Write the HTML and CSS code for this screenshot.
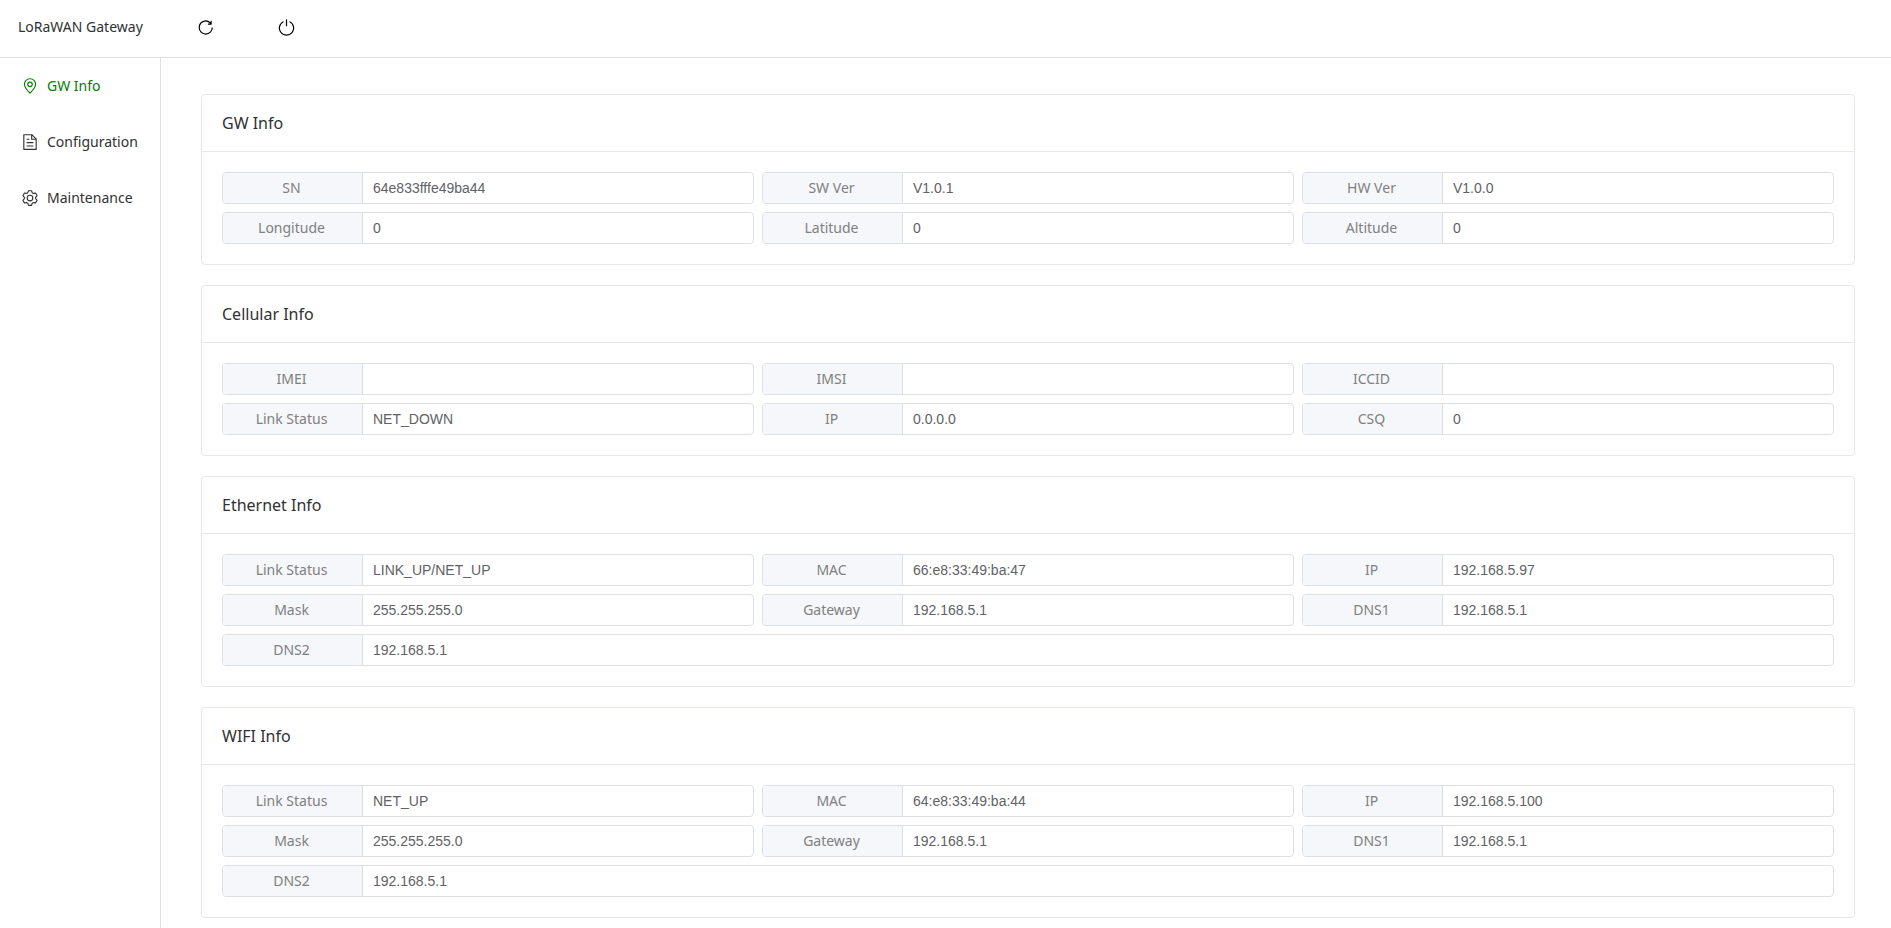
FILE: index.html
```html
<!DOCTYPE html>
<html lang="en">
<head>
<meta charset="utf-8">
<title>LoRaWAN Gateway</title>
<link rel="stylesheet" href="styles.css">
</head>
<body>
<div class="app">
  <header class="topbar">
    <h1 class="brand">LoRaWAN Gateway</h1>
    <div class="actions">
      <button class="icon-button" type="button" aria-label="Refresh">
        <svg class="action-icon" viewBox="0 0 1024 1024" aria-hidden="true"><path d="M784.512 230.272v-50.56a32 32 0 1 1 64 0v149.056a32 32 0 0 1-32 32H667.52a32 32 0 1 1 0-64h92.992A320 320 0 1 0 524.8 833.152a320 320 0 0 0 320-320h64a384 384 0 0 1-384 384 384 384 0 0 1-384-384 384 384 0 0 1 643.712-282.88z"/></svg>
      </button>
      <button class="icon-button" type="button" aria-label="Power">
        <svg class="action-icon" viewBox="0 0 1024 1024" aria-hidden="true"><path d="M352 159.872V230.4a352 352 0 1 0 320 0v-70.528A416.128 416.128 0 0 1 512 960a416 416 0 0 1-160-800.128z"/><path d="M512 64q32 0 32 32v320q0 32-32 32t-32-32V96q0-32 32-32z"/></svg>
      </button>
    </div>
  </header>
  <div class="layout">
    <nav class="sidebar">
      <a class="menu-item active" href="#info">
        <svg class="menu-icon" viewBox="0 0 1024 1024" aria-hidden="true"><path d="M800 416a288 288 0 1 0-576 0c0 118.144 94.528 272.128 288 456.576C705.472 688.128 800 534.144 800 416zM512 960C277.312 746.688 160 565.312 160 416a352 352 0 0 1 704 0c0 149.312-117.312 330.688-352 544z"/><path d="M512 512a96 96 0 1 0 0-192 96 96 0 0 0 0 192zm0 64a160 160 0 1 1 0-320 160 160 0 0 1 0 320z"/></svg>
        <span>GW Info</span>
      </a>
      <a class="menu-item" href="#configuration">
        <svg class="menu-icon" viewBox="0 0 1024 1024" aria-hidden="true"><path d="M832 384H576V128H192v768h640V384zm-26.496-64L640 154.496V320h165.504zM160 64h480l256 256v608a32 32 0 0 1-32 32H160a32 32 0 0 1-32-32V96a32 32 0 0 1 32-32zm160 448h384v64H320v-64zm0-192h160v64H320v-64zm0 384h384v64H320v-64z"/></svg>
        <span>Configuration</span>
      </a>
      <a class="menu-item" href="#maintenance">
        <svg class="menu-icon" viewBox="0 0 1024 1024" aria-hidden="true"><path d="M600.704 64a32 32 0 0 1 30.464 22.208l35.2 109.376c14.784 7.232 28.928 15.36 42.432 24.512l112.384-24.192a32 32 0 0 1 34.432 15.36L944.32 364.8a32 32 0 0 1-4.032 37.504l-77.12 85.12a357.12 357.12 0 0 1 0 49.024l77.12 85.248a32 32 0 0 1 4.032 37.504l-88.704 153.6a32 32 0 0 1-34.432 15.296L708.8 803.904c-13.44 9.088-27.648 17.28-42.368 24.512l-35.264 109.376A32 32 0 0 1 600.704 960H423.296a32 32 0 0 1-30.464-22.208L357.696 828.48a351.616 351.616 0 0 1-42.56-24.64l-112.32 24.256a32 32 0 0 1-34.432-15.36L79.68 659.2a32 32 0 0 1 4.032-37.504l77.12-85.248a357.12 357.12 0 0 1 0-48.896l-77.12-85.248A32 32 0 0 1 79.68 364.8l88.704-153.6a32 32 0 0 1 34.432-15.296l112.32 24.256c13.568-9.152 27.776-17.408 42.56-24.64l35.2-109.312A32 32 0 0 1 423.232 64H600.64zm-23.424 64H446.72l-36.352 113.088-24.512 11.968a294.113 294.113 0 0 0-34.816 20.096l-22.656 15.36-116.224-25.088-65.28 113.152 79.68 88.192-1.92 27.136a293.12 293.12 0 0 0 0 40.192l1.92 27.136-79.808 88.192 65.344 113.152 116.224-25.024 22.656 15.296a294.113 294.113 0 0 0 34.816 20.096l24.512 11.968L446.72 896h130.688l36.48-113.152 24.448-11.904a288.282 288.282 0 0 0 34.752-20.096l22.592-15.296 116.288 25.024 65.28-113.152-79.744-88.192 1.92-27.136a293.12 293.12 0 0 0 0-40.256l-1.92-27.136 79.808-88.128-65.344-113.152-116.288 24.96-22.592-15.232a287.616 287.616 0 0 0-34.752-20.096l-24.448-11.904L577.344 128zM512 320a192 192 0 1 1 0 384 192 192 0 0 1 0-384zm0 64a128 128 0 1 0 0 256 128 128 0 0 0 0-256z"/></svg>
        <span>Maintenance</span>
      </a>
    </nav>
    <main class="content">
      <section class="card">
        <h2 class="card-title">GW Info</h2>
        <div class="fields">
          <label class="field"><span class="field-label">SN</span><input class="field-value" type="text" readonly value="64e833fffe49ba44"></label>
          <label class="field"><span class="field-label">SW Ver</span><input class="field-value" type="text" readonly value="V1.0.1"></label>
          <label class="field"><span class="field-label">HW Ver</span><input class="field-value" type="text" readonly value="V1.0.0"></label>
          <label class="field"><span class="field-label">Longitude</span><input class="field-value" type="text" readonly value="0"></label>
          <label class="field"><span class="field-label">Latitude</span><input class="field-value" type="text" readonly value="0"></label>
          <label class="field"><span class="field-label">Altitude</span><input class="field-value" type="text" readonly value="0"></label>
        </div>
      </section>
      <section class="card">
        <h2 class="card-title">Cellular Info</h2>
        <div class="fields">
          <label class="field"><span class="field-label">IMEI</span><input class="field-value" type="text" readonly value=""></label>
          <label class="field"><span class="field-label">IMSI</span><input class="field-value" type="text" readonly value=""></label>
          <label class="field"><span class="field-label">ICCID</span><input class="field-value" type="text" readonly value=""></label>
          <label class="field"><span class="field-label">Link Status</span><input class="field-value" type="text" readonly value="NET_DOWN"></label>
          <label class="field"><span class="field-label">IP</span><input class="field-value" type="text" readonly value="0.0.0.0"></label>
          <label class="field"><span class="field-label">CSQ</span><input class="field-value" type="text" readonly value="0"></label>
        </div>
      </section>
      <section class="card">
        <h2 class="card-title">Ethernet Info</h2>
        <div class="fields">
          <label class="field"><span class="field-label">Link Status</span><input class="field-value" type="text" readonly value="LINK_UP/NET_UP"></label>
          <label class="field"><span class="field-label">MAC</span><input class="field-value" type="text" readonly value="66:e8:33:49:ba:47"></label>
          <label class="field"><span class="field-label">IP</span><input class="field-value" type="text" readonly value="192.168.5.97"></label>
          <label class="field"><span class="field-label">Mask</span><input class="field-value" type="text" readonly value="255.255.255.0"></label>
          <label class="field"><span class="field-label">Gateway</span><input class="field-value" type="text" readonly value="192.168.5.1"></label>
          <label class="field"><span class="field-label">DNS1</span><input class="field-value" type="text" readonly value="192.168.5.1"></label>
          <label class="field field-wide"><span class="field-label">DNS2</span><input class="field-value" type="text" readonly value="192.168.5.1"></label>
        </div>
      </section>
      <section class="card">
        <h2 class="card-title">WIFI Info</h2>
        <div class="fields">
          <label class="field"><span class="field-label">Link Status</span><input class="field-value" type="text" readonly value="NET_UP"></label>
          <label class="field"><span class="field-label">MAC</span><input class="field-value" type="text" readonly value="64:e8:33:49:ba:44"></label>
          <label class="field"><span class="field-label">IP</span><input class="field-value" type="text" readonly value="192.168.5.100"></label>
          <label class="field"><span class="field-label">Mask</span><input class="field-value" type="text" readonly value="255.255.255.0"></label>
          <label class="field"><span class="field-label">Gateway</span><input class="field-value" type="text" readonly value="192.168.5.1"></label>
          <label class="field"><span class="field-label">DNS1</span><input class="field-value" type="text" readonly value="192.168.5.1"></label>
          <label class="field field-wide"><span class="field-label">DNS2</span><input class="field-value" type="text" readonly value="192.168.5.1"></label>
        </div>
      </section>
    </main>
  </div>
</div>
</body>
</html>
```
FILE: styles.css
```css
*,
*::before,
*::after {
  box-sizing: border-box;
}

body {
  margin: 0;
  background: #fff;
  color: #303133;
  font-family: "Noto Sans", sans-serif;
  font-size: 14px;
}

.app {
  display: flex;
  flex-direction: column;
  min-height: 100vh;
}

.topbar {
  display: flex;
  align-items: center;
  gap: 53px;
  padding: 16px 18px 19px;
  border-bottom: 1px solid #dcdfe6;
}

.brand {
  margin: 0;
  font-size: 14px;
  font-weight: 400;
  line-height: 22px;
}

.actions {
  display: flex;
  gap: 62px;
}

.icon-button {
  display: flex;
  padding: 0;
  border: 0;
  background: none;
  color: #000;
  cursor: pointer;
}

.action-icon {
  width: 19px;
  height: 19px;
  fill: currentColor;
}

.layout {
  display: flex;
  flex: 1;
}

.sidebar {
  flex: none;
  width: 161px;
  border-right: 1px solid #dcdfe6;
}

.menu-item {
  display: flex;
  align-items: center;
  gap: 8px;
  height: 56px;
  padding-left: 21px;
  color: #303133;
  line-height: 20px;
  text-decoration: none;
}

.menu-item.active {
  color: #008000;
}

.menu-icon {
  width: 18px;
  height: 18px;
  fill: currentColor;
}

.content {
  display: flex;
  flex: 1;
  flex-direction: column;
  gap: 20px;
  min-width: 0;
  padding: 36px 36px 10px 40px;
}

.card {
  border: 1px solid #e4e7ed;
  border-radius: 4px;
}

.card-title {
  margin: 0;
  padding: 16px 20px;
  border-bottom: 1px solid #e4e7ed;
  font-size: 16px;
  font-weight: 400;
  line-height: 24px;
}

.fields {
  display: grid;
  grid-template-columns: repeat(3, 1fr);
  gap: 8px;
  padding: 20px;
}

.field {
  display: flex;
  height: 32px;
  overflow: hidden;
  border: 1px solid #dcdfe6;
  border-radius: 4px;
}

.field-wide {
  grid-column: 1 / -1;
}

.field-label {
  flex: none;
  width: 140px;
  padding-right: 2px;
  border-right: 1px solid #dcdfe6;
  background: #f5f7fa;
  color: #808080;
  line-height: 30px;
  text-align: center;
}

.field-value {
  flex: 1;
  min-width: 0;
  padding: 0 10px;
  border: 0;
  outline: 0;
  background: none;
  color: #606266;
  font: 14px "Liberation Sans", Arial, sans-serif;
}
```
